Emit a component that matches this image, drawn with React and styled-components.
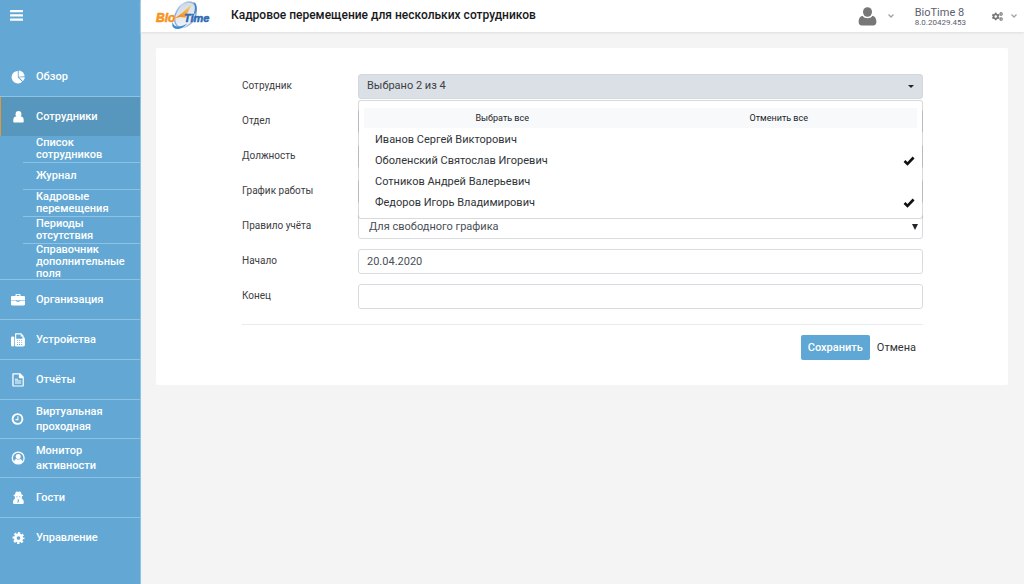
import React, { useState } from "react";
import styled, { createGlobalStyle } from "styled-components";
import { FaCogs } from "react-icons/fa";

const GlobalStyle = createGlobalStyle`
  * { box-sizing: border-box; }
  body {
    margin: 0;
    background: #f4f4f4;
    color: #3d4043;
    font: 11px/16px Roboto, "Liberation Sans", sans-serif;
  }
  button, input, select { font: inherit; color: inherit; margin: 0; }
  a { color: inherit; text-decoration: none; }
`;

const Page = styled.div`
  display: flex;
  min-height: 100vh;
`;

const Sidebar = styled.aside`
  flex: none;
  width: 141px;
  background: #63a8d4;
  border-right: 1px solid #8fc1e1;
  color: #fff;
  font-weight: 500;
`;

const MenuButton = styled.button`
  display: flex;
  align-items: center;
  height: 31px;
  margin-bottom: 26px;
  padding: 0 10px;
  border: 0;
  background: none;
  color: #fff;
`;

const NavItem = styled.a`
  display: flex;
  align-items: center;
  gap: 11px;
  padding: ${(p) => (p.$wrapped ? "4px 28px 4px 11px" : "12px 10px 12px 11px")};
  line-height: 15px;
  background: ${(p) => (p.$active ? "#5796bd" : "none")};
  box-shadow: ${(p) => (p.$active ? "inset 1px 0 #e09a35" : "none")};
  border-top: ${(p) => (p.$first ? "0" : "1px solid #8cc2e4")};
  svg { flex: none; }
`;

const SubMenu = styled.div`
  margin-bottom: -1px;
  padding-left: 23px;
`;

const SubItem = styled.a`
  display: flex;
  align-items: center;
  min-height: 27px;
  padding: 0 15px 0 13px;
  line-height: 12px;
  border-bottom: 1px solid #8cc2e4;
  &:last-child { border-bottom: 0; }
`;

const Main = styled.div`
  flex: 1;
  min-width: 0;
`;

const Header = styled.header`
  display: flex;
  align-items: center;
  height: 32px;
  padding: 0 7px 0 14px;
  background: #fff;
  box-shadow: 0 1px 2px #dedede;
`;

const Logo = styled.svg`
  width: 58px;
  height: 32px;
  margin-right: 18px;
`;

const Title = styled.h1`
  flex: 1;
  margin: 0;
  padding-bottom: 2px;
  font-size: 12px;
  line-height: 16px;
  font-weight: 500;
  color: #17191b;
`;

const HeaderButton = styled.button`
  display: flex;
  align-items: center;
  gap: ${(p) => p.$gap}px;
  padding: 0;
  border: 0;
  background: none;
  color: #777;
`;

const Version = styled.div`
  margin: 0 26px 0 21px;
  padding-top: 2px;
  font-size: 11px;
  line-height: 11px;
  color: #5c6070;
  small { display: block; font-size: 8px; line-height: 10px; }
`;

const Card = styled.form`
  margin: 16px 16px 16px 15px;
  padding: 26px 85px 25px 86px;
  background: #fff;
  border-radius: 2px;
`;

const Fields = styled.div`
  display: grid;
  gap: 10px;
`;

const Row = styled.div`
  display: grid;
  grid-template-columns: 116px 1fr;
  align-items: center;
`;

const Label = styled.label`
  font-size: 10px;
  padding-bottom: 2px;
`;

const Control = styled.input`
  width: 100%;
  height: 25px;
  padding: 0 8px 1px;
  border: 1px solid #d8dcdf;
  border-radius: 3px;
  background: #fff;
  color: #495057;
`;

const SelectBox = styled.div`
  display: grid;
  align-items: center;
  > * { grid-area: 1 / 1; }
  > svg { justify-self: end; margin-right: 5px; pointer-events: none; }
`;

const Select = styled(Control).attrs({ as: "select" })`
  appearance: none;
  padding: 0 10px;
`;

const Picker = styled.div`
  position: relative;
`;

const PickerButton = styled.button`
  display: flex;
  align-items: center;
  justify-content: space-between;
  width: 100%;
  height: 25px;
  padding: 0 8px 1px;
  border: 1px solid #d1d8de;
  border-radius: 3px;
  background: #dae0e6;
`;

const Menu = styled.div`
  position: absolute;
  z-index: 1;
  top: 26px;
  left: 0;
  right: 0;
  padding: 7px 5px 4px;
  border: 1px solid rgba(0, 0, 0, 0.15);
  border-radius: 3px;
  background: #fff;
  background-clip: padding-box;
  color: #303438;
`;

const Actions = styled.div`
  display: grid;
  grid-template-columns: 1fr 1fr;
  margin-bottom: 2px;
`;

const BulkButton = styled.button`
  height: 20px;
  border: 0;
  padding: 0;
  background: #f8f9fa;
  font-size: 9px;
  color: #212529;
`;

const Option = styled.label`
  display: flex;
  align-items: center;
  justify-content: space-between;
  height: 21px;
  padding: 0 2px 1px 11px;
  input {
    position: absolute;
    opacity: 0;
  }
  svg { display: none; }
  input:checked + svg { display: block; }
`;

const Footer = styled.div`
  display: flex;
  justify-content: flex-end;
  margin-top: 15px;
  padding-top: 10px;
  border-top: 1px solid #e9ecee;
`;

const Button = styled.button`
  height: 25px;
  padding: 0 7px;
  border: 0;
  border-radius: 2px;
  background: ${(p) => (p.$primary ? "#5fa7d4" : "none")};
  color: ${(p) => (p.$primary ? "#fff" : "#303338")};
  font-weight: ${(p) => (p.$primary ? 500 : 400)};
`;

const NavIcon = ({ children }) => (
  <svg width="14" height="14" viewBox="0 0 14 14" fill="currentColor" aria-hidden="true">
    {children}
  </svg>
);

const PieIcon = () => (
  <NavIcon>
    <path d="M6.800 1v6.300l4.300 4.400A6.200 6.200 0 1 1 6.800 1z" />
    <path d="M7.700.6a6.100 6.100 0 0 1 5.900 5.600L7.700 6.700z" />
    <path d="M8.200 7.200h5.600a6 6 0 0 1-1.900 4.100z" />
  </NavIcon>
);

const EmployeeIcon = () => (
  <NavIcon>
    <ellipse cx="7.500" cy="4.200" rx="2.900" ry="3.200" />
    <path d="M4.500 6.500h6c1.500.4 2.200 1.700 2.200 3.500v1.500c0 .7-.4 1-1 1H3.300c-.6 0-1-.3-1-1V10c0-1.800.7-3.100 2.200-3.500z" />
  </NavIcon>
);

const BriefcaseIcon = () => (
  <NavIcon>
    <path d="M4.500 3V1.900c0-.6.4-1 1-1h3c.6 0 1 .4 1 1V3H8.300v-.900H5.700V3z" />
    <path d="M1.200 2.900h11.600c.7 0 1.200.5 1.200 1.200v3H0v-3c0-.7.5-1.200 1.200-1.200z" />
    <path d="M0 7.500h5.300v.6c0 .4.3.6.6.6h2.200c.3 0 .6-.2.6-.6v-.6H14v3.800c0 .7-.5 1.200-1.200 1.200H1.200c-.7 0-1.200-.5-1.200-1.200z" />
    <path d="M6.200 7.500h1.600v.6H6.200z" />
  </NavIcon>
);

const FaxIcon = () => (
  <NavIcon>
    <rect x="0" y="3.400" width="3.300" height="10" rx="1.300" />
    <path
      fillRule="evenodd"
      d="M4 1c0-.4.300-.7.700-.7h5.500L12.600 2.700v1.600c.8.200 1.300.8 1.300 1.600v5.900c0 .9-.7 1.600-1.600 1.600H4.700c-.4 0-.7-.3-.7-.7zM5.200 1.500v4.200h6.200V3.500H9.700V1.500zM6 7.300v.8h.9v-.8zM8.100 7.300v.8H9v-.8zM10.200 7.300v.8h.9v-.8zM6 9.200v.8h.9v-.8zM8.100 9.200v.8H9v-.8zM10.200 9.200v.8h.9v-.8zM6 11.100v.8h.9v-.8zM8.100 11.100v.8H9v-.8zM10.200 11.100v.8h.9v-.8z"
    />
  </NavIcon>
);

const FileIcon = () => (
  <NavIcon>
    <path
      fillRule="evenodd"
      d="M1.300 1.100c0-.5.400-.8.800-.8h7.200l3.500 3.500v9c0 .5-.4.800-.8.800H2.100c-.5 0-.8-.3-.8-.8zM2.600 1.500v10.900h9V5.200H8.700c-.5 0-.8-.4-.8-.8V1.500zM4 5.700h2.900v1H4zM4 7.500h6.200v1H4zM4 9.400h6.200v1H4z"
    />
  </NavIcon>
);

const ClockIcon = () => (
  <NavIcon>
    <circle cx="6.500" cy="7" r="4.900" fill="none" stroke="currentColor" strokeWidth="1.900" />
    <path d="M6.900 4.200v3.400H4.500" fill="none" stroke="currentColor" strokeWidth="1.100" />
  </NavIcon>
);

const VisitorIcon = () => (
  <NavIcon>
    <circle cx="7.200" cy="7" r="5.900" fill="none" stroke="currentColor" strokeWidth="1.300" />
    <circle cx="7.200" cy="5.500" r="2.500" />
    <path d="M3 10.800c.3-1.900 1.200-2.800 2.300-2.900 1.200.9 2.600.9 3.800 0 1.100.1 2 1 2.300 2.900-2.400 2.500-6 2.500-8.400 0z" />
  </NavIcon>
);

const GuestIcon = () => (
  <NavIcon>
    <path
      fillRule="evenodd"
      d="M4.700 1.200c.4-.8 1.200-.7 1.900-.4.500.2 1 .2 1.500 0 .7-.3 1.500-.3 1.800.5l.7 2.200c.8.200 1.500.5 1.500.9s-.5.700-1.200.9c.1.900 0 1.600-.3 2.200 1.500.8 2.200 2 2.200 3.900 0 1.200-.6 1.700-1.700 1.700H3.700C2.600 13.100 2 12.600 2 11.400c0-1.900.7-3.100 2.100-3.900-.3-.6-.4-1.300-.3-2.200-.8-.2-1.300-.5-1.300-.9s.600-.7 1.400-.9zM5.200 5.600v.7h1.400v-.7zM8 5.600v.7h1.400v-.7zM6.200 8.600l.6 1-.4 2.300h.4l.5-2 .5 2h.4l-.4-2.300.6-1z"
    />
  </NavIcon>
);

const GearIcon = () => (
  <NavIcon>
    <circle cx="7.500" cy="7" r="3.200" fill="none" stroke="currentColor" strokeWidth="2.700" />
    <circle cx="7.500" cy="7" r="5" fill="none" stroke="currentColor" strokeWidth="1.900" strokeDasharray="2.300 1.627" strokeDashoffset="1.150" />
  </NavIcon>
);

const Person = () => (
  <svg width="19" height="19" viewBox="0 0 19 19" fill="currentColor" aria-hidden="true">
    <ellipse cx="9.500" cy="5" rx="4.500" ry="4.800" />
    <path d="M4.600 8.700c1.100 1.800 2.800 2.500 4.900 2.500s3.800-.7 4.900-2.500c2.700.6 4 3 4 6 0 2.400-1.200 3.700-3.200 3.700H3.800c-2 0-3.200-1.300-3.200-3.700 0-3 1.300-5.400 4-6z" />
  </svg>
);

const Bars = () => (
  <svg width="13" height="11" viewBox="0 0 13 11" fill="currentColor" aria-hidden="true">
    <rect y="0" width="13" height="2.200" rx=".5" />
    <rect y="4.300" width="13" height="2.200" rx=".5" />
    <rect y="8.600" width="13" height="2.200" rx=".5" />
  </svg>
);

const Check = () => (
  <svg width="12" height="10" viewBox="0 0 12 10" fill="none" stroke="#111" strokeWidth="2.600" aria-hidden="true">
    <path d="M1.500 5 4.500 8 10.600 1.500" />
  </svg>
);

const Chevron = () => (
  <svg width="6" height="4" viewBox="0 0 6 4" fill="none" stroke="#a3a3a3" strokeWidth="1.300" aria-hidden="true">
    <path d="M.5.500 3 3 5.500.500" />
  </svg>
);

const Triangle = ({ width, height }) => (
  <svg width={width} height={height} viewBox="0 0 6 6" preserveAspectRatio="none" fill="#212529" aria-hidden="true">
    <path d="M0 0h6L3 6z" />
  </svg>
);

const BioTimeLogo = () => (
  <Logo viewBox="0 0 58 32" role="img" aria-label="BioTime">
    <defs>
      <linearGradient id="ring" x1="0" y1="1" x2="1" y2="0">
        <stop offset="0" stopColor="#4d93d2" />
        <stop offset=".4" stopColor="#c3d6e8" />
        <stop offset="1" stopColor="#6a9acb" />
      </linearGradient>
      <linearGradient id="face" x1="0" y1="0" x2="1" y2="1">
        <stop offset="0" stopColor="#c9d6e4" />
        <stop offset="1" stopColor="#f7fafc" />
      </linearGradient>
      <linearGradient id="hand" x1="0" y1="1" x2="1" y2="0">
        <stop offset="0" stopColor="#ef8200" />
        <stop offset="1" stopColor="#ffd071" />
      </linearGradient>
    </defs>
    <ellipse cx="30.500" cy="14.800" rx="9.500" ry="13.800" transform="rotate(32 30.500 14.800)" fill="url(#face)" stroke="url(#ring)" strokeWidth="1.400" />
    <path d="M17.800 22c.5 5.500 7 6 14.500 1.500-4 5-10 6.800-13.300 4.600-1.800-1.300-2.200-3.600-1.200-6.100z" fill="#3d8bd0" />
    <path d="M38 1.800c4.200 1.200 4.700 6.500 2.200 12.200l-1.300-.5c1.500-5.300 1.500-9-.9-11.700z" fill="#4a83c2" />
    <path d="M36.500 4.500 30.500 17.500l-5.500-.5-5 1.200L27 13z" fill="url(#hand)" />
    <g fontFamily="Liberation Sans, sans-serif" fontStyle="italic" fontWeight="700">
      <text x="1" y="22" fontSize="12" fill="#f6941e" stroke="#f6941e" strokeWidth=".6">Bio</text>
      <text x="29" y="22" fontSize="11" fill="#2f69b2" stroke="#2f69b2" strokeWidth=".5">Time</text>
    </g>
  </Logo>
);

const subItems = [
  "Список сотрудников",
  "Журнал",
  "Кадровые перемещения",
  "Периоды отсутствия",
  "Справочник дополнительные поля",
];

const navItems = [
  { icon: BriefcaseIcon, text: "Организация" },
  { icon: FaxIcon, text: "Устройства" },
  { icon: FileIcon, text: "Отчёты" },
  { icon: ClockIcon, text: "Виртуальная проходная", wrapped: true },
  { icon: VisitorIcon, text: "Монитор активности", wrapped: true },
  { icon: GuestIcon, text: "Гости" },
  { icon: GearIcon, text: "Управление" },
];

const people = [
  "Иванов Сергей Викторович",
  "Оболенский Святослав Игоревич",
  "Сотников Андрей Валерьевич",
  "Федоров Игорь Владимирович",
];

const SelectField = ({ id, label, value }) => (
  <Row>
    <Label htmlFor={id}>{label}</Label>
    <SelectBox>
      <Select id={id}>
        <option>{value}</option>
      </Select>
      <Triangle width={6} height={6} />
    </SelectBox>
  </Row>
);

const InputField = ({ id, label, value }) => (
  <Row>
    <Label htmlFor={id}>{label}</Label>
    <Control id={id} type="text" defaultValue={value} />
  </Row>
);

export default function App() {
  const [selected, setSelected] = useState([1, 3]);
  const toggle = (i) =>
    setSelected((list) => (list.includes(i) ? list.filter((n) => n !== i) : [...list, i]));

  return (
    <Page>
      <GlobalStyle />
      <Sidebar>
        <MenuButton type="button" aria-label="Меню">
          <Bars />
        </MenuButton>
        <nav>
          <NavItem href="#overview" $first>
            <PieIcon />
            Обзор
          </NavItem>
          <NavItem href="#employees" $active>
            <EmployeeIcon />
            Сотрудники
          </NavItem>
          <SubMenu>
            {subItems.map((text) => (
              <SubItem href="#employees" key={text}>{text}</SubItem>
            ))}
          </SubMenu>
          {navItems.map(({ icon: Icon, text, wrapped }) => (
            <NavItem href="#section" key={text} $wrapped={wrapped}>
              <Icon />
              {text}
            </NavItem>
          ))}
        </nav>
      </Sidebar>
      <Main>
        <Header>
          <BioTimeLogo />
          <Title>Кадровое перемещение для нескольких сотрудников</Title>
          <HeaderButton type="button" aria-label="Профиль" $gap={11}>
            <Person />
            <Chevron />
          </HeaderButton>
          <Version>
            BioTime 8<small>8.0.20429.453</small>
          </Version>
          <HeaderButton type="button" aria-label="Настройки" $gap={8}>
            <FaCogs size={11} />
            <Chevron />
          </HeaderButton>
        </Header>
        <Card onSubmit={(e) => e.preventDefault()}>
          <Fields>
            <Row>
              <Label htmlFor="employee">Сотрудник</Label>
              <Picker>
                <PickerButton id="employee" type="button" aria-expanded="true">
                  Выбрано {selected.length} из {people.length}
                  <Triangle width={6} height={3} />
                </PickerButton>
                <Menu>
                  <Actions>
                    <BulkButton type="button" onClick={() => setSelected(people.map((_, i) => i))}>
                      Выбрать все
                    </BulkButton>
                    <BulkButton type="button" onClick={() => setSelected([])}>
                      Отменить все
                    </BulkButton>
                  </Actions>
                  {people.map((name, i) => (
                    <Option key={name}>
                      {name}
                      <input type="checkbox" checked={selected.includes(i)} onChange={() => toggle(i)} />
                      <Check />
                    </Option>
                  ))}
                </Menu>
              </Picker>
            </Row>
            <SelectField id="department" label="Отдел" />
            <SelectField id="position" label="Должность" />
            <SelectField id="schedule" label="График работы" />
            <SelectField id="rule" label="Правило учёта" value="Для свободного графика" />
            <InputField id="start" label="Начало" value="20.04.2020" />
            <InputField id="end" label="Конец" />
          </Fields>
          <Footer>
            <Button type="submit" $primary>Сохранить</Button>
            <Button type="button">Отмена</Button>
          </Footer>
        </Card>
      </Main>
    </Page>
  );
}
